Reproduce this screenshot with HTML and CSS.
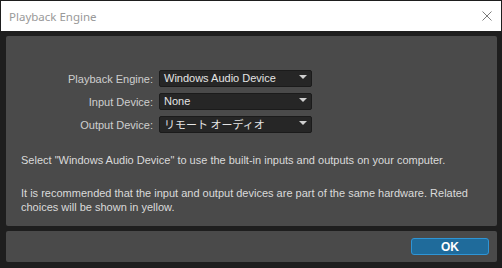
FILE: index.html
```
<html>
  <head>
    <link rel="stylesheet" href="styles.css">
  </head>
  <body>
    <div class="dialog">
      <div class="titlebar">
        <div class="title">Playback Engine</div>
        <svg class="close" width="10" height="10" viewBox="0 0 10 10">
          <path d="M0.5 0.5 L9.5 9.5 M9.5 0.5 L0.5 9.5" stroke="#7b7b7b" stroke-width="1" fill="none"/>
        </svg>
      </div>
      <div class="body">
        <div class="panel">
          <div class="fields">
            <div class="field">
              <div class="label">Playback Engine:</div>
              <div class="select">Windows Audio Device<span class="arrow"></span></div>
            </div>
            <div class="field">
              <div class="label">Input Device:</div>
              <div class="select">None<span class="arrow"></span></div>
            </div>
            <div class="field">
              <div class="label">Output Device:</div>
              <div class="select jp">リモート オーディオ<span class="arrow"></span></div>
            </div>
          </div>
          <p class="note">Select "Windows Audio Device" to use the built-in inputs and outputs on your computer.</p>
          <p class="note">It is recommended that the input and output devices are part of the same hardware. Related choices will be shown in yellow.</p>
        </div>
        <div class="footer">
          <button class="ok">OK</button>
        </div>
      </div>
    </div>
  </body>
</html>
```
FILE: styles.css
```
body {
  margin: 0;
  background: #1d1d1d;
  width: 502px;
  height: 268px;
  overflow: hidden;
  font-family: "Liberation Sans", Arial, sans-serif;
}
.dialog {
  width: 500px;
  height: 266px;
  padding: 1px 1px 0 1px;
  background: #1e1e1e;
  display: flex;
  flex-direction: column;
}
.titlebar {
  height: 30px;
  background: #ffffff;
  display: flex;
  align-items: center;
  justify-content: space-between;
  padding: 0 9px 0 8px;
  flex-shrink: 0;
}
.title {
  font-family: "Noto Sans", "Open Sans", sans-serif;
  font-size: 11.5px;
  color: #999999;
}
.body {
  padding: 5px 4px 0 5px;
  display: flex;
  flex-direction: column;
  gap: 5px;
}
.panel {
  height: 190px;
  box-sizing: border-box;
  background: #4a4a4a;
  border-radius: 2px;
  padding: 34px 15px 0 15px;
}
.fields {
  display: flex;
  flex-direction: column;
  gap: 6px;
}
.field {
  display: flex;
  align-items: center;
  gap: 6px;
}
.label {
  width: 132px;
  text-align: right;
  font-size: 11px;
  color: #cfcfcf;
}
.select {
  position: relative;
  width: 153px;
  height: 17px;
  box-sizing: border-box;
  background: #262626;
  border: 1px solid #1b1b1b;
  border-radius: 2px;
  padding-left: 4px;
  font-size: 11px;
  line-height: 15px;
  color: #e4e4e4;
}
.select.jp {
  font-family: "Noto Sans CJK JP", sans-serif;
  font-size: 11px;
}
.arrow {
  position: absolute;
  right: 4px;
  top: 4px;
  width: 0;
  height: 0;
  border-left: 4px solid transparent;
  border-right: 4px solid transparent;
  border-top: 4px solid #cfcfcf;
}
.note {
  margin: 20px 0 0 0;
  font-size: 11px;
  line-height: 14px;
  color: #dadada;
}
.note + .note { margin-top: 19px; }
.footer {
  height: 31px;
  box-sizing: border-box;
  background: #4a4a4a;
  border-radius: 2px;
  display: flex;
  justify-content: flex-end;
  align-items: flex-start;
  padding: 7px 8px 0 0;
}
.ok {
  width: 78px;
  height: 17px;
  background: #1f6b9b;
  border: 1px solid #2e95d6;
  border-radius: 3px;
  color: #ffffff;
  font-family: "Liberation Sans", Arial, sans-serif;
  font-weight: bold;
  font-size: 12px;
  padding: 0;
}
```
